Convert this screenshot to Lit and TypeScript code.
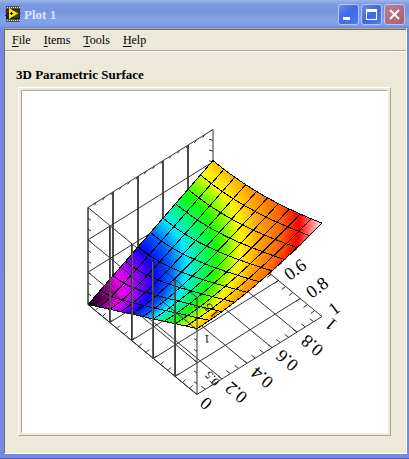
import { LitElement, html, svg, css } from "lit";
import { customElement } from "lit/decorators.js";

type Pt = [number, number];

// Axonometric projection of the unit box: s runs front-right, t runs back-right, z runs up.
const project = (s: number, t: number, z: number): Pt => [
  88 + 109 * s + 125 * t,
  305 + 90 * s - 78 * t - 97 * z,
];
const height = (s: number, t: number) => 0.68 * Math.hypot(s, t);
const onSurface = (s: number, t: number) => project(s, t, height(s, t));
const path = (pts: Pt[]) =>
  "M" + pts.map(([x, y]) => `${x.toFixed(1)} ${y.toFixed(1)}`).join("L");

const RAMP: [number, number[]][] = [
  [0, [10, 0, 10]],
  [0.06, [90, 0, 90]],
  [0.14, [235, 0, 235]],
  [0.18, [200, 0, 250]],
  [0.23, [110, 0, 250]],
  [0.28, [15, 0, 245]],
  [0.35, [0, 90, 255]],
  [0.42, [0, 235, 255]],
  [0.49, [0, 250, 110]],
  [0.55, [20, 255, 0]],
  [0.65, [255, 250, 0]],
  [0.73, [255, 165, 0]],
  [0.82, [255, 100, 0]],
  [0.9, [255, 0, 0]],
  [1, [255, 235, 235]],
];

function ramp(v: number): string {
  let i = 1;
  while (i < RAMP.length - 1 && RAMP[i][0] < v) i++;
  const [a, ca] = RAMP[i - 1];
  const [b, cb] = RAMP[i];
  const k = Math.min(1, (v - a) / (b - a));
  return `rgb(${ca.map((c, j) => Math.round(c + (cb[j] - c) * k)).join(",")})`;
}

const CELLS = 50;
const MESH = 10;
const steps = (n: number) => Array.from({ length: n + 1 }, (_, i) => i / n);

function patches() {
  const out = [];
  for (let j = CELLS - 1; j >= 0; j--) {
    for (let i = 0; i < CELLS; i++) {
      const [s, t, s2, t2] = [i, j, i + 1, j + 1].map((n) => n / CELLS);
      const color = ramp(Math.hypot((s + s2) / 2, (t + t2) / 2) / Math.SQRT2);
      const d = path([onSurface(s, t), onSurface(s2, t), onSurface(s2, t2), onSurface(s, t2)]);
      out.push(svg`<path d=${d + "Z"} fill=${color} stroke=${color} />`);
    }
  }
  return out;
}

function mesh() {
  const fine = steps(20);
  return steps(MESH)
    .map((c) => path(fine.map((k) => onSurface(c, k))) + path(fine.map((k) => onSurface(k, c))))
    .join("");
}

// Grid lines of one box face, given a map from face coordinates to the box.
function face(f: (u: number, v: number) => Pt, nu: number, nv: number) {
  return (
    steps(nu).map((u) => path([f(u, 0), f(u, 1)])).join("") +
    steps(nv).map((v) => path([f(0, v), f(1, v)])).join("")
  );
}

// The inner uprights of a wall, drawn heavier than the rest of its grid.
const uprights = (f: (u: number, v: number) => Pt) =>
  steps(5).slice(1, -1).map((u) => path([f(u, 0), f(u, 1)])).join("");

function ticks(f: (u: number) => Pt, n: number, dx: number, dy: number) {
  return steps(n)
    .slice(1, -1)
    .map((u) => {
      const [x, y] = f(u);
      return path([[x, y], [x + dx, y + dy]]);
    })
    .join("");
}

const backWall = (u: number, v: number) => project(0, u, v);
const frontWall = (u: number, v: number) => project(u, 0, v);

const BEHIND =
  face(backWall, 5, 3) +
  face((u, v) => project(u, v, 0), 5, 5) +
  ticks((u) => project(0, u, 1), 15, -2, 3) +
  ticks((u) => project(0, 1, u), 9, -4, -1) +
  ticks((u) => project(1, u, 0), 15, -4, -3) +
  ticks((u) => project(u, 1, 0), 15, -4, 3);

const FRONT =
  face(frontWall, 5, 3) +
  ticks((u) => project(u, 0, 0), 15, 3, -3) +
  ticks((u) => project(0, 0, u), 9, 3, 2) +
  ticks((u) => project(1, 0, u), 9, -3, -2);

type Label = [string, number, number, number];
const LABELS: Label[] = [
  ["0.6", 295, 270, -37],
  ["0.8", 317, 288, -37],
  ["1", 334, 309, -37],
  ["0", 206, 404, 220],
  ["0.2", 236, 393, 220],
  ["0.4", 262, 378, 220],
  ["0.6", 287, 361, 220],
  ["0.8", 312, 346, 220],
  ["1", 331, 325, 220],
];
const DEPTH_LABELS: Label[] = [
  ["1.5", 211, 311, 230],
  ["1", 207, 339, 180],
  ["0.5", 212, 379, 230],
];

@customElement("surface-plot")
export class SurfacePlot extends LitElement {
  static styles = css`
    :host { display: block; background: #fff; }
    svg { display: block; width: 100%; height: 100%; }
    .cells { stroke-width: 0.6; shape-rendering: crispEdges; }
    .line { fill: none; stroke: #000; }
    .mesh { shape-rendering: crispEdges; }
    .grid { stroke: #333; }
    .upright { stroke: #666; stroke-width: 2; shape-rendering: crispEdges; }
    text { font-family: "Liberation Serif", serif; text-anchor: middle; dominant-baseline: central; }
    .big { font-size: 18px; }
    .small { font-size: 12px; }
  `;

  render() {
    const text = ([s, x, y, a]: Label) =>
      svg`<text transform="translate(${x} ${y}) rotate(${a})">${s}</text>`;
    return html`
      <svg viewBox="22 92 365 340" role="img" aria-label="3D parametric surface">
        <path class="line upright" d=${uprights(backWall)} />
        <path class="line grid" d=${BEHIND} />
        <g class="cells">${patches()}</g>
        <path class="line mesh" d=${mesh()} />
        <path class="line upright" d=${uprights(frontWall)} />
        <path class="line grid" d=${FRONT} />
        <g class="big">${LABELS.map(text)}</g>
        <g class="small">${DEPTH_LABELS.map(text)}</g>
      </svg>
    `;
  }
}

@customElement("app-root")
export class AppRoot extends LitElement {
  static styles = css`
    :host {
      display: flex;
      flex-direction: column;
      box-sizing: border-box;
      min-height: 100vh;
      padding: 0 2px 4px 4px;
      background: linear-gradient(#9ab6ec 0, #7a96df 5px, #7a96df 12px, #80a4e8 20px, #7f9ee6 25px, #7288dd 28px, #7489e2 100%);
      border-bottom: 1px solid #5656b4;
      font-family: "Liberation Serif", serif;
      color: #000;
    }
    .title {
      display: flex;
      align-items: center;
      gap: 3px;
      height: 28px;
      padding: 0 2px 0 1px;
    }
    .title svg { display: block; }
    h1 { flex: 1; margin: 0; padding-top: 2px; font-size: 13px; line-height: 16px; color: #dce4f8; }
    .buttons { display: flex; gap: 2px; }
    .buttons button {
      width: 21px;
      height: 21px;
      padding: 0;
      border: 1px solid #b4c6f4;
      border-radius: 3px;
      background: linear-gradient(135deg, #6a8be8, #3d68e0 50%, #4f80f0);
    }
    .buttons .close { background: linear-gradient(135deg, #bd7f90, #ab5d6c); }
    .client {
      flex: 1;
      display: flex;
      flex-direction: column;
      border: 1px solid;
      border-color: #aca899 #fff #fff #716f64;
      box-shadow: inset 0 1px #716f64;
      background: #ece9d8;
    }
    nav {
      display: flex;
      align-items: center;
      gap: 13px;
      height: 21px;
      padding: 0 7px;
      border-bottom: 1px solid #aca899;
      box-shadow: 0 1px #fff;
    }
    nav button {
      padding: 0;
      border: 0;
      background: none;
      font: 12px/16px "Liberation Serif", serif;
      color: #000;
    }
    nav u { text-underline-offset: 2px; }
    main { flex: 1; display: flex; flex-direction: column; padding: 16px 15px 17px 13px; }
    h2 { margin: 0 0 4px -2px; font-size: 13px; line-height: 16px; }
    .frame {
      flex: 1;
      display: flex;
      border: 1px solid;
      border-color: #fff #aca899 #aca899 #fff;
      padding: 2px;
    }
    surface-plot { flex: 1; border: 1px solid; border-color: #aca899 #fff #fff #aca899; }
  `;

  render() {
    return html`
      <header class="title">
        <svg width="16" height="16" viewBox="0 0 16 16" aria-hidden="true">
          <path d="M1 0h14v16H1z" fill="#222" />
          <path d="M1 1.5h14M1 14.5h14" stroke="#555" stroke-width="3" />
          <path d="M2 1.5h13M2 14.5h13" stroke="#ddd" stroke-dasharray="1 1" />
          <path d="M9 4h5v8H9z" fill="#174a17" />
          <path d="M0 5.5h4" stroke="#e01010" />
          <path d="M0 9.5h4" stroke="#1010e0" />
          <path d="M12 7.5h4" stroke="#e01010" />
          <path d="M4 2l9 5.5L4 13z" fill="#ffe800" />
          <path d="M5 7.5h3M6.500 6v3" stroke="#000" />
        </svg>
        <h1>Plot 1</h1>
        <div class="buttons">
          <button aria-label="Minimize">
            <svg width="19" height="19"><path d="M4 12h7v3H4z" fill="#fff" /></svg>
          </button>
          <button aria-label="Maximize">
            <svg width="19" height="19"><path d="M4 4h11v11H4zM5 7v7h9V7z" fill="#fff" fill-rule="evenodd" /></svg>
          </button>
          <button class="close" aria-label="Close">
            <svg width="19" height="19"><path d="M5 5l9 9M14 5l-9 9" stroke="#fff" stroke-width="2" /></svg>
          </button>
        </div>
      </header>
      <div class="client">
        <nav>
          <button><u>F</u>ile</button>
          <button><u>I</u>tems</button>
          <button><u>T</u>ools</button>
          <button><u>H</u>elp</button>
        </nav>
        <main>
          <h2>3D Parametric Surface</h2>
          <div class="frame"><surface-plot></surface-plot></div>
        </main>
      </div>
    `;
  }
}
